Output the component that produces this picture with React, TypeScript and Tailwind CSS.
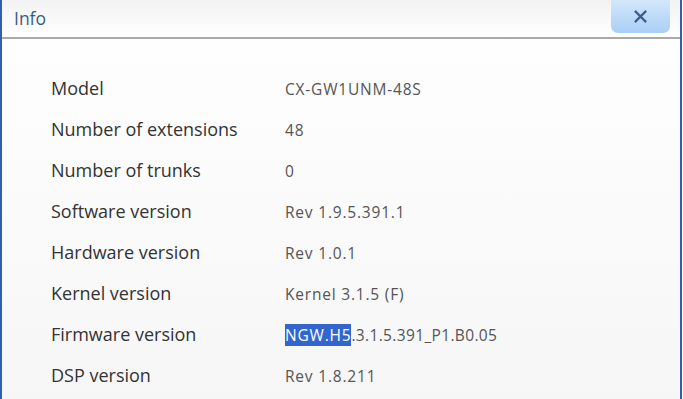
import React from "react";

const rows: [string, React.ReactNode][] = [
  ["Model", "CX-GW1UNM-48S"],
  ["Number of extensions", "48"],
  ["Number of trunks", "0"],
  ["Software version", "Rev 1.9.5.391.1"],
  ["Hardware version", "Rev 1.0.1"],
  ["Kernel version", "Kernel 3.1.5 (F)"],
  [
    "Firmware version",
    <>
      <span className="bg-[#3266cc] text-white">NGW.H5</span>
      <span className="tracking-[0.35px]">.3.1.5.391_P1.B0.05</span>
    </>,
  ],
  ["DSP version", "Rev 1.8.211"],
];

export default function App() {
  return (
    <div
      className="w-[683px] h-[399px] overflow-hidden flex bg-white"
      style={{ fontFamily: '"Open Sans", "Noto Sans", sans-serif' }}
    >
      <div className="w-[2px] bg-[#2f5fae]" />
      <div className="flex-1 flex flex-col bg-gradient-to-b from-white to-[#f6f6f6]">
        <div className="h-[39px] shrink-0 flex items-start justify-between border-b-2 border-[#a9a9a9] bg-gradient-to-b from-[#f2f2f2] to-white">
          <div className="pl-[12px] pt-[6px] text-[17.5px] text-[#3b5b8c] leading-[24px]">Info</div>
          <div className="mr-[10px] w-[59px] h-[33px] rounded-b-[7px] bg-gradient-to-b from-[#d3e7fb] to-[#a9cff5] flex items-center justify-center">
            <svg width="15" height="15" viewBox="0 0 16 16">
              <path d="M2 2 L14 14 M14 2 L2 14" stroke="#3d5f8d" strokeWidth="2.4" strokeLinecap="butt" />
            </svg>
          </div>
        </div>
        <div className="pt-[28px] pl-[49px] flex flex-col">
          {rows.map(([k, v], i) => (
            <div key={i} className="flex items-center h-[41px]">
              <div className="w-[234px] text-[18px] text-[#333] leading-[24px]">{k}</div>
              <div className="text-[15.5px] tracking-[0.8px] text-[#555] leading-[20px] pt-[3px]">{v}</div>
            </div>
          ))}
        </div>
      </div>
      <div className="w-[2px] bg-[#2f5fae]" />
      <div className="w-[1px] bg-white" />
    </div>
  );
}
